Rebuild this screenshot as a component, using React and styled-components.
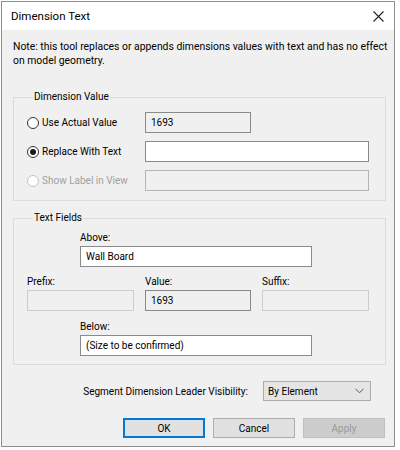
import React from "react";
import styled, { createGlobalStyle } from "styled-components";

const GlobalStyle = createGlobalStyle`
    html, body {
        margin: 0;
        padding: 0;
        background: #ffffff;
    }
    body {
        font-family: Roboto, "Segoe UI", "Noto Sans", sans-serif;
        font-size: 10px;
        color: #000;
    }
    * {
        box-sizing: border-box;
    }
`;

const Window = styled.div`
    margin: 1px 0 0 1px;
    width: 394px;
    height: 446px;
    border: 1px solid #8e8e8e;
    background: #f0f0f0;
    display: flex;
    flex-direction: column;
`;

const TitleBar = styled.div`
    height: 28px;
    flex-shrink: 0;
    background: #ffffff;
    display: flex;
    align-items: center;
    justify-content: space-between;
    padding: 0 9px 0 9px;
    font-size: 11.5px;
`;

const CloseButton = styled.div`
    width: 14px;
    height: 14px;
    display: flex;
    align-items: center;
    justify-content: center;
`;

const Body = styled.div`
    flex: 1;
    padding: 10px 8px 0 11px;
    display: flex;
    flex-direction: column;
`;

const Note = styled.p`
    margin: 0;
    font-size: 10.4px;
    line-height: 14px;
    white-space: nowrap;
`;

const Group = styled.fieldset`
    margin: ${p => p.$top}px 0 0 0;
    padding: ${p => p.$padTop}px 15px ${p => p.$padBottom}px 13px;
    border: 1px solid #dcdcdc;
    min-width: 0;
`;

const Legend = styled.legend`
    padding: 0 1px;
    margin-left: 6px;
    line-height: 14px;
`;

const ValueGrid = styled.div`
    display: grid;
    grid-template-columns: 118px 1fr;
    row-gap: 8px;
    align-items: center;
`;

const RadioLabel = styled.label`
    display: flex;
    align-items: center;
    gap: 3px;
    color: ${p => (p.$disabled ? "#a0a0a0" : "#000")};
`;

const RadioCircle = styled.span`
    width: 12px;
    height: 12px;
    border-radius: 50%;
    border: 1px solid ${p => (p.$disabled ? "#c4c4c4" : "#333333")};
    background: #ffffff;
    display: flex;
    align-items: center;
    justify-content: center;
    flex-shrink: 0;

    &::after {
        content: "";
        width: 6px;
        height: 6px;
        border-radius: 50%;
        background: #1a1a1a;
        display: ${p => (p.$checked ? "block" : "none")};
    }
`;

const Field = styled.div`
    height: 21px;
    width: ${p => p.$width}px;
    border: 1px solid ${p => p.$border || "#8a8a8a"};
    background: ${p => p.$bg || "#ffffff"};
    display: flex;
    align-items: center;
    padding: 0 5px;
`;

const FieldBlock = styled.div`
    display: flex;
    flex-direction: column;
    margin-left: ${p => p.$indent || 0}px;
    width: ${p => p.$width}px;
`;

const SmallLabel = styled.div`
    line-height: 16px;
`;

const TripleRow = styled.div`
    display: grid;
    grid-template-columns: 107px 106px 107px;
    column-gap: 11px;
    margin: ${p => p.$top}px 0 ${p => p.$bottom}px 0;
`;

const TripleCell = styled.div`
    display: flex;
    flex-direction: column;
`;

const LeaderRow = styled.div`
    display: flex;
    align-items: center;
    justify-content: flex-end;
    gap: 15px;
    margin: 16px 15px 0 0;
`;

const Select = styled.div`
    width: 108px;
    height: 20px;
    border: 1px solid #adadad;
    background: #e5e5e5;
    display: flex;
    align-items: center;
    justify-content: space-between;
    padding: 0 6px 0 4px;
`;

const ButtonRow = styled.div`
    display: flex;
    justify-content: flex-end;
    gap: 8px;
    margin: 17px 1px 0 0;
`;

const Button = styled.div`
    width: 82px;
    height: 20px;
    display: flex;
    align-items: center;
    justify-content: center;
    background: ${p => (p.$disabled ? "#cccccc" : "#e1e1e1")};
    border: ${p => (p.$focused ? "2px solid #0078d7" : p.$disabled ? "1px solid #bfbfbf" : "1px solid #adadad")};
    color: ${p => (p.$disabled ? "#9a9a9a" : "#000")};
`;

const Chevron = () => (
    <svg width="9" height="6" viewBox="0 0 9 6">
        <path d="M0.5 0.8 L4.5 4.8 L8.5 0.8" fill="none" stroke="#555" strokeWidth="1" />
    </svg>
);

const CloseIcon = () => (
    <svg width="11" height="11" viewBox="0 0 11 11">
        <path d="M0.5 0.5 L10.5 10.5 M10.5 0.5 L0.5 10.5" stroke="#222" strokeWidth="1.1" />
    </svg>
);

const App = () => {
    return (
        <>
            <GlobalStyle />
            <Window>
                <TitleBar>
                    <span>Dimension Text</span>
                    <CloseButton>
                        <CloseIcon />
                    </CloseButton>
                </TitleBar>
                <Body>
                    <Note>
                        Note: this tool replaces or appends dimensions values with text and has no effect
                        <br />
                        on model geometry.
                    </Note>

                    <Group $top={22} $padTop={8} $padBottom={9}>
                        <Legend>Dimension Value</Legend>
                        <ValueGrid>
                            <RadioLabel>
                                <RadioCircle />
                                Use Actual Value
                            </RadioLabel>
                            <Field $width={106} $bg="#f0f0f0">1693</Field>

                            <RadioLabel>
                                <RadioCircle $checked />
                                Replace With Text
                            </RadioLabel>
                            <Field $width={224} />

                            <RadioLabel $disabled>
                                <RadioCircle $disabled />
                                Show Label in View
                            </RadioLabel>
                            <Field $width={224} $bg="#f0f0f0" $border="#b4b4b4" />
                        </ValueGrid>
                    </Group>

                    <Group $top={10} $padTop={5} $padBottom={8}>
                        <Legend>Text Fields</Legend>
                        <FieldBlock $indent={53} $width={232}>
                            <SmallLabel>Above:</SmallLabel>
                            <Field $width={232}>Wall Board</Field>
                        </FieldBlock>

                        <TripleRow $top={7} $bottom={8}>
                            <TripleCell>
                                <SmallLabel>Prefix:</SmallLabel>
                                <Field $width={107} $bg="#f0f0f0" $border="#cdcdcd" />
                            </TripleCell>
                            <TripleCell>
                                <SmallLabel>Value:</SmallLabel>
                                <Field $width={106} $bg="#f0f0f0">1693</Field>
                            </TripleCell>
                            <TripleCell>
                                <SmallLabel>Suffix:</SmallLabel>
                                <Field $width={107} $bg="#f0f0f0" $border="#cdcdcd" />
                            </TripleCell>
                        </TripleRow>

                        <FieldBlock $indent={53} $width={232}>
                            <SmallLabel>Below:</SmallLabel>
                            <Field $width={232}>(Size to be confirmed)</Field>
                        </FieldBlock>
                    </Group>

                    <LeaderRow>
                        <span>Segment Dimension Leader Visibility:</span>
                        <Select>
                            <span>By Element</span>
                            <Chevron />
                        </Select>
                    </LeaderRow>

                    <ButtonRow>
                        <Button $focused>OK</Button>
                        <Button>Cancel</Button>
                        <Button $disabled>Apply</Button>
                    </ButtonRow>
                </Body>
            </Window>
        </>
    );
};

export default App;
